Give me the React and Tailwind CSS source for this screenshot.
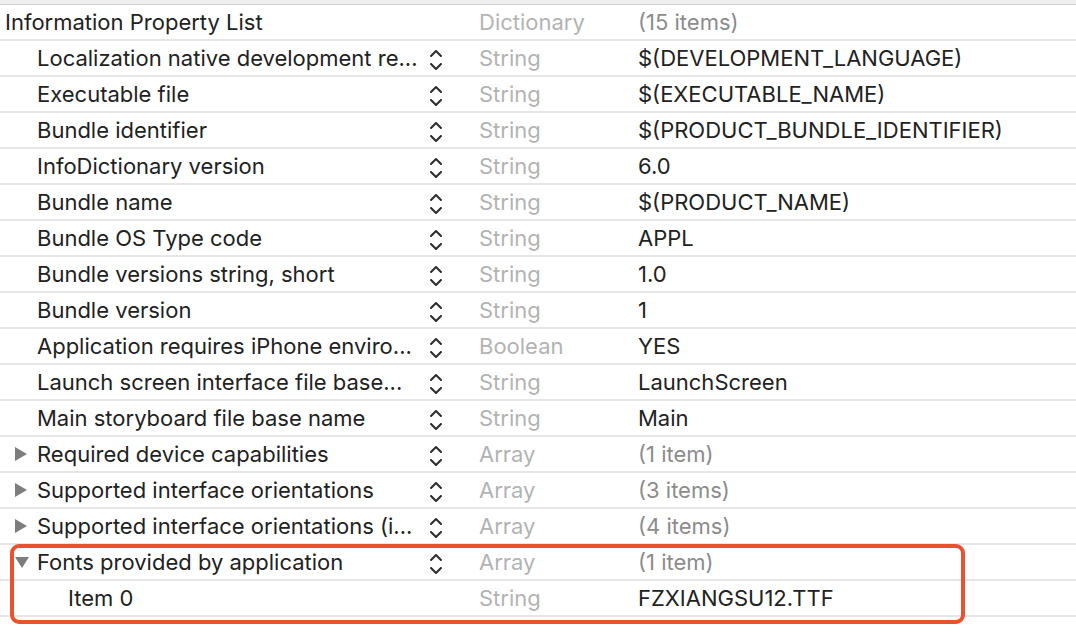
import React from 'react';

const rows = [
  { key: 'Information Property List', type: 'Dictionary', value: '(15 items)', muted: true, level: 0, stepper: false },
  { key: 'Localization native development re...', type: 'String', value: '$(DEVELOPMENT_LANGUAGE)', level: 1, stepper: true },
  { key: 'Executable file', type: 'String', value: '$(EXECUTABLE_NAME)', level: 1, stepper: true },
  { key: 'Bundle identifier', type: 'String', value: '$(PRODUCT_BUNDLE_IDENTIFIER)', level: 1, stepper: true },
  { key: 'InfoDictionary version', type: 'String', value: '6.0', level: 1, stepper: true },
  { key: 'Bundle name', type: 'String', value: '$(PRODUCT_NAME)', level: 1, stepper: true },
  { key: 'Bundle OS Type code', type: 'String', value: 'APPL', level: 1, stepper: true },
  { key: 'Bundle versions string, short', type: 'String', value: '1.0', level: 1, stepper: true },
  { key: 'Bundle version', type: 'String', value: '1', level: 1, stepper: true },
  { key: 'Application requires iPhone enviro...', type: 'Boolean', value: 'YES', level: 1, stepper: true },
  { key: 'Launch screen interface file base...', type: 'String', value: 'LaunchScreen', level: 1, stepper: true },
  { key: 'Main storyboard file base name', type: 'String', value: 'Main', level: 1, stepper: true },
  { key: 'Required device capabilities', type: 'Array', value: '(1 item)', muted: true, level: 1, stepper: true, toggle: 'closed' },
  { key: 'Supported interface orientations', type: 'Array', value: '(3 items)', muted: true, level: 1, stepper: true, toggle: 'closed' },
  { key: 'Supported interface orientations (i...', type: 'Array', value: '(4 items)', muted: true, level: 1, stepper: true, toggle: 'closed' },
  { key: 'Fonts provided by application', type: 'Array', value: '(1 item)', muted: true, level: 1, stepper: true, toggle: 'open' },
  { key: 'Item 0', type: 'String', value: 'FZXIANGSU12.TTF', level: 2, stepper: false },
];

function Stepper() {
  return (
    <svg width="16" height="26" viewBox="0 0 16 26" fill="none" stroke="#2b2b2b" strokeWidth="2" strokeLinecap="round" strokeLinejoin="round">
      <path d="M3 9 L8 4 L13 9" />
      <path d="M3 17 L8 22 L13 17" />
    </svg>
  );
}

function Toggle({ state }) {
  if (state === 'open') {
    return (
      <svg width="16" height="14" viewBox="0 0 16 14"><path d="M1 2 H15 L8 13 Z" fill="#7d7d7d" /></svg>
    );
  }
  return (
    <svg width="14" height="16" viewBox="0 0 14 16"><path d="M1 1 V15 L13 8 Z" fill="#7d7d7d" /></svg>
  );
}

function Row({ row }) {
  const indent = row.level === 0 ? 'pl-[5px]' : row.level === 1 ? 'pl-[37px]' : 'pl-[68px]';
  return (
    <div className="relative flex items-center h-[36px] border-b-2 border-[#e6e6e6]">
      <div className={`relative w-[424px] shrink-0 ${indent} text-[#222222] whitespace-nowrap`}>
        {row.toggle && (
          <span className="absolute left-[14px] top-1/2 -translate-y-1/2 flex">
            <Toggle state={row.toggle} />
          </span>
        )}
        {row.key}
      </div>
      <div className="w-[55px] shrink-0 flex justify-start pl-[4px] pt-[3px]">
        {row.stepper && <Stepper />}
      </div>
      <div className="w-[159px] shrink-0 text-[#b3b3b3] whitespace-nowrap">{row.type}</div>
      <div className={`whitespace-nowrap ${row.muted ? 'text-[#8c8c8c]' : 'text-[#222222]'}`}>{row.value}</div>
    </div>
  );
}

export default function App() {
  return (
    <div className="w-[1076px] h-[640px] bg-white overflow-hidden text-[22px] leading-[28px]" style={{ fontFamily: 'Inter, "Liberation Sans", sans-serif' }}>
      <div className="h-[4px] bg-[#efefef]" />
      <div className="h-[1px] bg-[#cfcfcf]" />
      <div className="relative">
        {rows.map((r, i) => (
          <Row key={i} row={r} />
        ))}
        <div className="absolute left-[10px] top-[539px] w-[955px] h-[80px] border-[4px] border-[#e8522d] rounded-[9px] pointer-events-none" />
      </div>
    </div>
  );
}
